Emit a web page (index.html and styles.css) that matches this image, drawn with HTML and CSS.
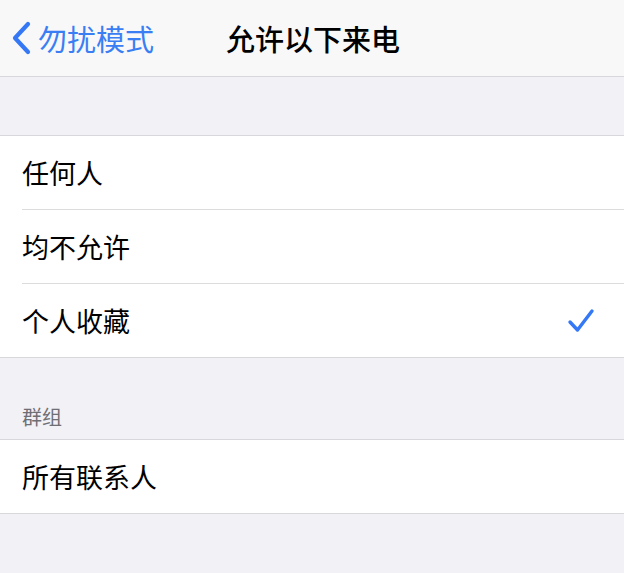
FILE: index.html
```html
<!DOCTYPE html>
<html lang="zh-CN">
<head>
    <meta charset="UTF-8">
    <meta name="viewport" content="width=device-width, initial-scale=1.0">
    <title>允许以下来电</title>
    <link rel="stylesheet" href="styles.css">
</head>
<body>

<div class="navbar">
    <a class="back" href="#">
        <svg class="chevron" width="22" height="34" viewBox="0 0 22 34">
            <path d="M18 3 L5 17 L18 31" fill="none" stroke="#3478f6" stroke-width="4.2" stroke-linecap="round" stroke-linejoin="round"/>
        </svg>
        <span>勿扰模式</span>
    </a>
    <h1 class="title">允许以下来电</h1>
</div>

<div class="spacer"></div>

<!-- Allow calls from -->
<div class="group">
    <div class="row"><span>任何人</span></div>
    <div class="row"><span>均不允许</span></div>
    <div class="row">
        <span>个人收藏</span>
        <svg class="check" width="28" height="28" viewBox="0 0 28 28">
            <path d="M3 15 L10.5 23 L25 4" fill="none" stroke="#3478f6" stroke-width="3.4" stroke-linecap="round" stroke-linejoin="round"/>
        </svg>
    </div>
</div>

<div class="section-header">群组</div>

<div class="group">
    <div class="row"><span>所有联系人</span></div>
</div>

</body>
</html>
```

FILE: styles.css
```css
body {
    margin: 0;
    background-color: #f2f1f6;
    font-family: "Noto Sans CJK SC", "Noto Sans", sans-serif;
    color: #000;
}

.navbar {
    height: 76px;
    background-color: #f8f8f9;
    border-bottom: 1px solid #d8d8dc;
    display: flex;
    align-items: center;
    position: relative;
}

.back {
    display: flex;
    align-items: center;
    gap: 6px;
    padding-left: 10px;
    color: #3a7ef3;
    text-decoration: none;
    font-size: 29px;
}

.back span {
    line-height: 1;
}

.title {
    position: absolute;
    left: 226px;
    top: 0;
    margin: 0;
    height: 76px;
    display: flex;
    align-items: center;
    font-size: 29px;
    font-weight: 500;
}

.spacer {
    height: 58px;
}

.group {
    background-color: #fff;
    border-top: 1px solid #d8d8dc;
    border-bottom: 1px solid #d8d8dc;
    padding-left: 22px;
}

.row {
    height: 73px;
    display: flex;
    align-items: center;
    justify-content: space-between;
    padding-right: 28px;
    font-size: 27px;
    border-bottom: 1px solid #dcdcde;
}

.row:last-child {
    border-bottom: none;
}

.check {
    margin-right: 1px;
}

.section-header {
    height: 81px;
    box-sizing: border-box;
    padding: 44px 0 0 22px;
    font-size: 20px;
    color: #6f6e74;
}
```
